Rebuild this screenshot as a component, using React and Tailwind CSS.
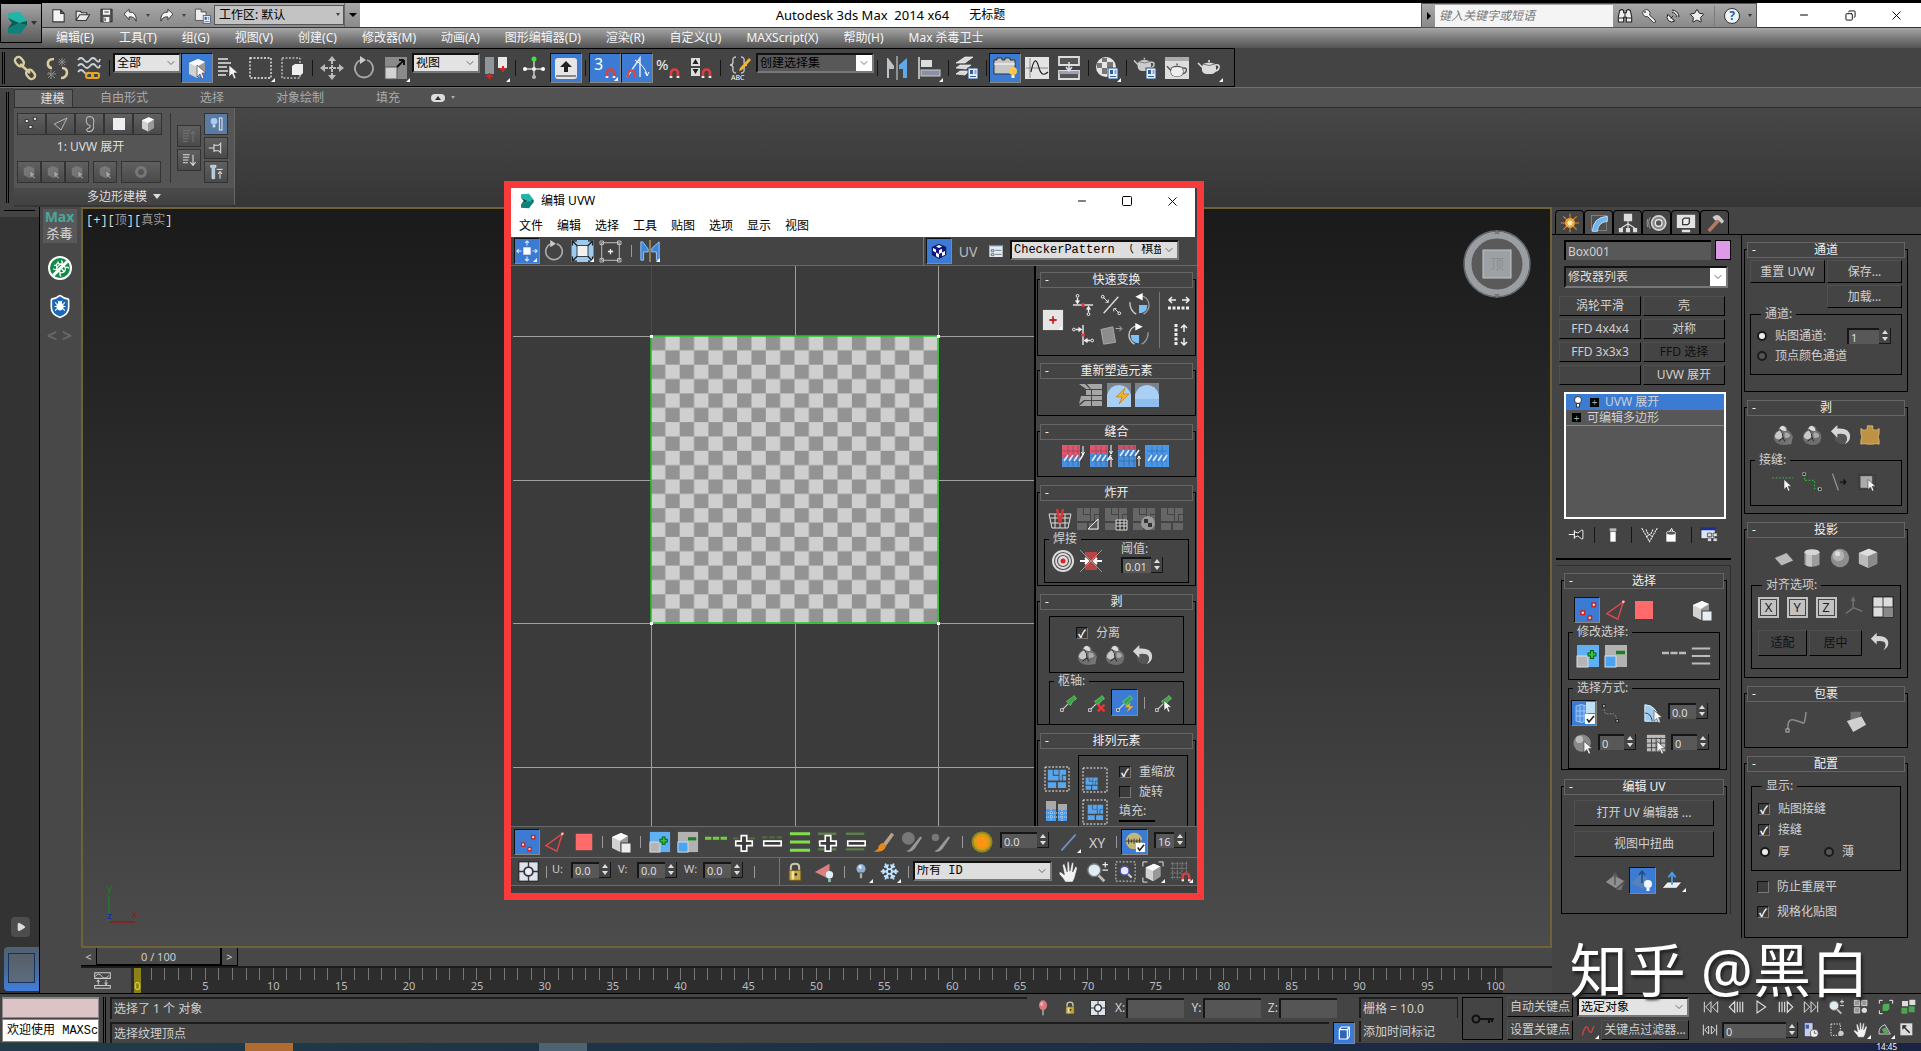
import { useState } from 'react';
import {
  ChevronDown, Minus, Square, X, Copy, Star, SatelliteDish, Snowflake, Bug, Shield, Play,
} from 'lucide-react';

/* Shared pieces of the drawings */
const magnet = (
  <>
    <path d="M14 22v-5a3.5 3.5 0 0 1 7 0v5" fill="none" stroke="#d94040" strokeWidth="2.6" />
    <path d="M12.7 21h2.6M19.7 21h2.6" stroke="#eee" strokeWidth="2" />
  </>
);
const cursor = <path d="M12 9v12l3-3 2 5 2-1-2-5h4z" fill="#f4f4f4" stroke="#333" strokeWidth=".6" />;
const badge = (
  <>
    <rect x="13" y="12" width="10" height="11" fill="#e8eef6" stroke="#2d4f78" />
    <rect x="15" y="14" width="3" height="4" fill="#2d5fa5" />
    <path d="M19.500 15h2M19.500 17h2M15 20.500h6" stroke="#2d5fa5" />
  </>
);
const teapot = (
  <>
    <path d="M6 10q6-3 12 0l1 3q1 6-4 7H9q-5-1-4-7z" fill="currentColor" />
    <path d="M6 14 1 9M18 11q5-1 4 3-1 3-4 3M12 8V6" fill="none" stroke="currentColor" strokeWidth="1.6" />
    <path d="M6 10q6 3 12 0" fill="none" stroke="#777" />
  </>
);
const stone = (
  <>
    <path d="M2 15q0-6 5-8 1-5 5-5 5 0 5 5 6 2 5 9-1 7-10 7-9-1-10-8z" fill="#6f6f6f" />
    <path d="M3 13q2-5 6-6 4 2 3 7-3 4-7 2-2-1-2-3z" fill="#c9c9c9" />
    <path d="M8 5q1-3 4-3 3 1 4 5-4 2-8-2z" fill="#dcdcdc" />
    <path d="M14 9q5 0 6 4-2 3-6 2-1-3 0-6z" fill="#a8a8a8" />
    <path d="M9 6q3 4 3 9l2 4M12 15l-5 4" fill="none" stroke="#222" />
  </>
);
const pin = (
  <>
    <path d="m4 20 7-7" stroke="#ccc" strokeWidth="1.5" />
    <rect x="2" y="19" width="3" height="3" fill="#222" stroke="#eee" />
    <path d="m9 10 5 5 1-3 4-4 2-1-3-4-2 2-4 3z" fill="#36a83e" stroke="#8de08b" strokeWidth=".7" />
  </>
);
const blocks = <path d="M1 1h6v7h7v6H1zM8 1h6v6H8zM15 1h8v6h-5v7h-3zM19 8h4v6h-4zM1 16h10v7H1zM13 16h10v7H13z" fill="currentColor" />;
const cube = (
  <>
    <path d="m4 7 9-4 7 3v11l-8 5-8-4z" fill="#d2d2d2" />
    <path d="m4 7 8 4 8-5-7-3z" fill="#fafafa" />
    <path d="m12 11 8-5v11l-8 5z" fill="#999" />
  </>
);
const ghostCube = (
  <>
    <path d="m5 7 7-3 7 3v9l-7 4-7-4z" fill="#8d8d8d" opacity=".6" />
    <path d="m13 10 1 11 2-3 3 3 1-2-3-2 3-1z" fill="#aaa" stroke="#444" strokeWidth=".5" />
  </>
);
const undoArrow = <path d="M1 8 8 1v4q13-1 14 8 0 6-6 9 4-5 2-9-2-3-10-2v4z" fill="#d6d6d6" />;
const knit = <path d="m3 17 4-6M8 17l4-6M13 17l4-6M18 17l4-6" stroke="#dfeaff" strokeWidth="1.600" />;
const meshLines = <path d="M2 7h20M2 12h20M2 17h20M7 2v20M12 2v20M17 2v20" stroke="#20304a" strokeWidth=".5" opacity=".6" />;
const flatPlane = <path d="m2 13 9-7 11 6-9 8z" fill="#8f8f8f" />;
const quad = (a, b) => (
  <>
    <rect x="1" y="1" width="22" height="22" fill={a} />
    <rect x="1" y="12" width="11" height="11" fill={b} stroke="#dde" />
  </>
);
const plusBox = <path d="M9 5h6v6h6v5h-6v6H9v-6H3v-5h6z" fill="#3a3a3a" stroke="#fff" strokeWidth="1.800" />;
const minusBox = <path d="M3 11h19v5H3z" fill="#3a3a3a" stroke="#fff" strokeWidth="1.800" />;

const glyphs = {
  newFile: <path d="M4 4h11l5 5v12H4zM15 4v5h5" fill="#f3f3f3" stroke="#333" strokeWidth="1.500" />,
  open: <path d="M3 19V6h6l2 2h7v3h4l-5 8zM3 19l5-8h14" fill="#e8e8e8" stroke="#333" strokeWidth="1.500" />,
  save: (
    <>
      <path d="M4 3h16v18H4z" fill="#555" stroke="#222" />
      <path d="M7 4h10v7H7zM8 14h8v7H8z" fill="#f2f2f2" />
      <path d="M10 15v5M9 7h6" stroke="#333" strokeWidth="1.500" />
    </>
  ),
  undo: <path d="M3 10l7-7v4q11 0 10 13-3-7-10-6v4z" fill="#f5f5f5" stroke="#333" strokeWidth="1.300" />,
  redo: <path d="M21 10l-7-7v4Q3 7 4 20q3-7 10-6v4z" fill="#f5f5f5" stroke="#333" strokeWidth="1.300" />,
  project: (
    <>
      <path d="M2 3h8v4h7v12H2z" fill="#eee" stroke="#333" />
      {badge}
    </>
  ),
  binoculars: <path d="M4 4q3-3 6 0v3h4V4q3-3 6 0l2 9v8h-8v-7h-4v7H2v-8zM3 15h7M14 15h7M12 8v5" fill="#f0f0f0" stroke="#222" strokeWidth="1.600" />,
  keySmall: <><path d="M13 11q2-4-1-7-3-3-7-1-4 3-2 7 3 4 7 3l9 9 3-1-1-3z" fill="#f4f4f4" stroke="#333" strokeWidth="1.400" /><circle cx="6" cy="6" r="1.500" fill="#555" /></>,
  hand: <path d="M8 23q-2-4-6-8-2-3 1-3l4 3L5 5q0-2 2-2l3 9V2q0-2 2-1l1 10 2-9q2-1 2 1l-1 9 3-6q2 0 2 2l-3 11-2 4z" fill="#f2f2f2" stroke="#444" strokeWidth=".6" />,
  lock: <><path d="M7 11V6q0-4 5-4t5 4v5" fill="none" stroke="#c9c9b0" strokeWidth="2.400" /><path d="M5 10h14v12H5z" fill="#c4a848" stroke="#6d5a1c" /><path d="M8 11h3v10H8z" fill="#f0e09a" /><circle cx="13" cy="15" r="1.500" fill="#222" /></>,
  link: (
    <g fill="none" stroke="#d9cda0" strokeWidth="2.400">
      <rect x="3" y="1" width="7" height="10" rx="3.500" transform="rotate(-40 6 6)" />
      <rect x="14" y="13" width="7" height="10" rx="3.500" transform="rotate(-40 18 18)" />
      <path d="m7 8 10 9" />
    </g>
  ),
  unlink: (
    <>
      <g fill="none" stroke="#d9cda0" strokeWidth="2.600">
        <path d="M9 3Q2 3 3 9q1 3 4 3M17 12q5 0 5 5-1 5-6 5" />
      </g>
      <path d="M14 3l6 6M20 3l-6 6M17 2v8M13 6h8M3 16l7 6M10 15l-7 7M6 14v9M2 18h9" stroke="#888" />
    </>
  ),
  bind: (
    <>
      <path d="M1 4q3-4 6 0t6 0 6 0 4-1M1 10q3-4 6 0t6 0 6 0 4-1M1 16q3-4 6 0t5 0" fill="none" stroke="#c9d3da" strokeWidth="1.800" />
      <rect x="9" y="17" width="7" height="5" rx="2" fill="none" stroke="#e9a81e" strokeWidth="2" />
      <rect x="15" y="17" width="7" height="5" rx="2" fill="none" stroke="#e9a81e" strokeWidth="2" />
    </>
  ),
  select: <>{cube}{cursor}</>,
  selectName: <><path d="M1 3h10M1 7h13M1 11h9M1 15h10M1 19h8" stroke="#e5e5e5" strokeWidth="1.500" />{cursor}</>,
  region: <rect x="1" y="2" width="21" height="20" fill="none" stroke="#eee" strokeWidth="1.300" strokeDasharray="2 1.500" />,
  crossing: (
    <>
      <rect x="1" y="2" width="18" height="20" fill="none" stroke="#eee" strokeDasharray="2 1.500" />
      <path d="m11 10 3-2h8v9l-2 2h-9z" fill="#eee" />
    </>
  ),
  move: (
    <>
      <path d="M12 0l4 5H8zM12 24l4-5H8zM0 12l5-4v8zM24 12l-5-4v8z" fill="#bbb" />
      <path d="M12 5v14M5 12h14" stroke="#bbb" strokeWidth="2" strokeDasharray="3 1" />
    </>
  ),
  rotate: <><path d="M15 4a9 9 0 1 1-6 0" fill="none" stroke="#aaa" strokeWidth="1.800" /><path d="m8 0 6 4-6 4z" fill="#ccc" /></>,
  scale: (
    <>
      <rect x="1" y="1" width="22" height="22" fill="#8a8a8a" />
      <rect x="1" y="11" width="12" height="12" fill="#d2d2d2" stroke="#555" />
      <path d="m13 11 7-7m0 0h-5m5 0v5" stroke="#111" strokeWidth="2" />
    </>
  ),
  pivot: (
    <>
      <path d="M1 1h9v17H1z" fill="#8d969b" /><path d="M14 1h9v11h-9z" fill="#e8e8e8" />
      <path d="M5.500 17v6M2.500 20h6M19 10v6M16 13h6" stroke="#d22" strokeWidth="2" />
    </>
  ),
  manipulate: (
    <>
      <path d="M12 3v18M3 13h18" stroke="#ccc" strokeWidth="1.500" />
      <circle cx="12" cy="3" r="2.500" fill="#4d4" /><circle cx="3" cy="13" r="2" fill="#fff" />
      <circle cx="21" cy="13" r="2" fill="#fff" /><circle cx="12" cy="21" r="2" fill="#bbb" /><circle cx="12" cy="13" r="2" fill="#eee" />
    </>
  ),
  keyboard: <><rect x="1" y="2" width="22" height="21" rx="3" fill="#e6e6e6" /><path d="M2 20h20" stroke="#888" strokeWidth="2" /><path d="m12 5 6 6h-4v5h-4v-5H6z" fill="#222" /></>,
  snap3: <><text x="1" y="14" fontSize="16" fill="#fff">3</text>{magnet}</>,
  snapAngle: <><path d="M2 21 15 2v19" fill="none" stroke="#dbe8ff" strokeWidth="1.500" /><path d="M10 4q10 6 12 15m-2-3 2 4 2-4" fill="none" stroke="#fff" /><path d="M3 22v-4a3 3 0 0 1 7 0v4" fill="none" stroke="#e04545" strokeWidth="2.500" /></>,
  snapPercent: <><text x="-1" y="14" fontSize="15" fill="#eee">%</text>{magnet}</>,
  snapSpin: <><path d="M2 2h9v8H2zM2 12h9v8H2z" fill="#ddd" /><path d="m6.500 3 3 5h-6zM6.500 18l3-5h-6z" fill="#222" />{magnet}</>,
  named: (
    <>
      <path d="M8 1Q4 1 5 6q0 3-3 3 3 0 3 3-1 5 3 5M13 1q4 0 3 5 0 3 3 3-3 0-3 3 1 5-3 5" fill="none" stroke="#ccc" strokeWidth="1.300" />
      <path d="m12 12 9-10 2 2-9 10-3 1z" fill="#f2b530" /><text x="3" y="24" fontSize="7" fill="#fff">ABC</text>
    </>
  ),
  mirror: <><path d="M2 2v20h2V13h5V10L3 2z" fill="#bcc4ca" /><path d="M22 2v20h-4V13h-4V9z" fill="#62a8e8" /><path d="M12 0v24" stroke="#ddd" /></>,
  uvMirror: <><path d="M2 2v20h3V13h5V10L4 2z" fill="#3d86d8" stroke="#9ccbff" /><path d="M22 2v20h-3V13h-5V9z" fill="#3d86d8" stroke="#9ccbff" /><path d="M12 0v24" stroke="#e8c070" /></>,
  align: <><path d="M2 1v22" stroke="#ddd" strokeWidth="1.500" /><rect x="4" y="4" width="11" height="7" fill="#ddd" /><rect x="4" y="14" width="19" height="6" fill="#8a90a5" stroke="#ccc" /></>,
  layers: <><path d="m1 7 9-6h8l-8 6zM1 12l4-3h11l-5 4zM1 18l4-3h9l-4 4z" fill="#d9d9d9" stroke="#fff" strokeWidth=".6" />{badge}</>,
  ribbon: (
    <>
      <path d="M1 4h3V2h5v2h3V2h5v2h5v14H1z" fill="#c6c6c6" stroke="#333" /><path d="M1 8h21" stroke="#fff" />
      <circle cx="20" cy="15" r="4" fill="#f9c84c" /><path d="M18.500 19h3v3h-3z" fill="#eee" />
    </>
  ),
  curve: <><rect x="0" y="1" width="24" height="22" fill="#e3e3e3" /><path d="M1 12h22M5 2v20" stroke="#888" /><path d="M6 16q4-20 8-4 3 10 9 4" fill="none" stroke="#222" strokeWidth="1.200" /></>,
  schematic: <><path d="M2 1h20v8H2zM2 15h20v8H2z" fill="#555" stroke="#ddd" strokeWidth="1.800" /><path d="M2 15h20v3H2z" fill="#9aa0c0" /><path d="M12 6v8m-3-3 3 4 3-4" stroke="#ddd" strokeWidth="1.600" fill="none" /></>,
  material: (
    <>
      <circle cx="11" cy="11" r="10" fill="#e6e6e6" />
      <path d="M7 2h5v4H7zM2 7h5v5H2zM12 6h6v6h-6zM7 12h5v6H7z" fill="#777" />{badge}
    </>
  ),
  renderSetup: <g color="#ccc"><g transform="translate(0 -4) scale(.95)">{teapot}</g>{badge}</g>,
  renderFrame: <><rect x="0" y="1" width="24" height="22" fill="#ddd" /><path d="M0 1h24v4H0z" fill="#aaa" /><g color="#555" transform="translate(1 2) scale(.92)">{teapot}</g><path d="M7 12q5-2 10 0l1 3q0 4-3 5H9q-3-1-3-5z" fill="#eee" /></>,
  render: <g color="#dcdcdc" transform="translate(0 -2)">{teapot}</g>,
  vertsGray: <g fill="#eee" stroke="#222"><rect x="3" y="6" width="4" height="4" /><rect x="14" y="3" width="4" height="4" /><rect x="8" y="14" width="4" height="4" /></g>,
  triGray: <path d="M3 12 20 4l-8 16z" fill="none" stroke="#bbb" strokeWidth="1.300" />,
  borderGray: <path d="M7 7q0-5 5-5 6 1 5 8-1 5 0 7-2 6-8 5-3-2 0-4 4-1 3-4-5-1-5-7z" fill="none" stroke="#bbb" strokeWidth="1.400" />,
  polyGray: <rect x="4" y="4" width="16" height="16" fill="#eee" />,
  cube,
  ghost: ghostCube,
  ring: <circle cx="12" cy="12" r="6" fill="none" stroke="#777" strokeWidth="4" />,
  loopUp: <path d="M3 4h11M3 8h10M3 12h9M3 16h8M3 20h7M18 21V6m-3 3 3-4 3 4" stroke="#777" strokeWidth="1.400" fill="none" />,
  loopDown: <path d="M3 4h10M3 8h9M3 12h8M3 16h7M18 4v15m-4-4 4 5 4-5" stroke="#ddd" strokeWidth="1.600" fill="none" />,
  bulbBar: <><circle cx="9" cy="8" r="5" fill="#a9cdf0" /><path d="M7 13h4v4H7z" fill="#cde" /><rect x="17" y="3" width="4" height="18" fill="none" stroke="#eee" strokeWidth="1.500" /></>,
  pushpin: <path d="M1 12h8M9 6v12M9 8h7l3-3v14l-3-3H9z" fill="#555" stroke="#ddd" strokeWidth="1.600" />,
  showEnd: <><path d="M4 2h8v3h-2v17H6V5H4z" fill="#9cc8ee" stroke="#eee" /><path d="M13 8h9M18 22V12m-3 3 3-4 3 4" stroke="#eee" strokeWidth="1.500" fill="none" /></>,
  verts: <g fill="#fff" stroke="#c22" strokeWidth="1.500"><rect x="17" y="5" width="3.500" height="3.500" /><rect x="6" y="13" width="3.500" height="3.500" /><rect x="13" y="18" width="3.500" height="3.500" /></g>,
  tri: <><path d="M2 16 20 3l-6 19z" fill="none" stroke="#e0484c" strokeWidth="1.500" /><circle cx="20" cy="3" r="1.500" fill="#fbb" /></>,
  poly: <rect x="3" y="3" width="18" height="18" fill="#ff6b6b" />,
  element: <>{cube}<rect x="13" y="13" width="10" height="10" fill="#e9eef2" stroke="#444" /></>,
  grow: <>{quad('#5fb0f5', '#b5b5b5')}<path d="M16 6v9M11.500 10.500h9" stroke="#0a5c10" strokeWidth="4" /><path d="M16 7v7M12.500 10.500h7" stroke="#2fc73a" strokeWidth="2" /></>,
  shrink: <>{quad('#b2b2b2', '#4ba4f2')}<path d="M12 8.500h9" stroke="#17801f" strokeWidth="3.500" /></>,
  dashes: <path d="M0 8h7M8.500 8h7M17 8h7" stroke="#6fd03c" strokeWidth="3.200" />,
  dashPlus: <><path d="M0 8h6M17 8h7" stroke="#4f6a40" strokeWidth="2.500" />{plusBox}</>,
  dashMinus: <><path d="M1 7h6M9 7h6M17 7h6" stroke="#4f6a40" strokeWidth="2.500" />{minusBox}</>,
  bars: <path d="M1 3h22M1 12h22M1 21h22" stroke="#7fe04a" strokeWidth="3.200" />,
  barPlus: <><path d="M1 3h20M1 12h20M1 20h20" stroke="#5c7d4c" strokeWidth="2.500" />{plusBox}</>,
  barMinus: <><path d="M1 3h20M1 20h20" stroke="#5c7d4c" strokeWidth="2.500" />{minusBox}</>,
  dashGray: <path d="M0 9h7M8.500 9h7M17 9h7" stroke="#bbb" strokeWidth="2.500" />,
  barsGray: <path d="M1 3h22M1 12h22M1 21h22" stroke="#bbb" strokeWidth="2.500" />,
  brush: <><path d="m10 15 10-13 3 2-10 14z" fill="#b9a288" /><path d="M11 13q5 2 2 6-4 5-12 3 5-1 5-5 2-4 5-4z" fill="#e08a20" /></>,
  brushBig: <><circle cx="8" cy="8" r="7" fill="#777" /><path d="m12 17 9-11 2 1-8 12q-4 5-9 3 4-1 6-5z" fill="#999" /></>,
  brushSmall: <><circle cx="7" cy="7" r="4" fill="#777" /><path d="m12 17 9-11 2 1-8 12q-4 5-9 3 4-1 6-5z" fill="#999" /></>,
  falloff: <><circle cx="12" cy="12" r="10.500" fill="#8a8a20" /><circle cx="12" cy="12" r="8.500" fill="#d89a18" /><circle cx="12" cy="12" r="5.500" fill="#ff9410" /></>,
  diag: <path d="M3 22 20 3" stroke="#6f93c8" strokeWidth="2.200" />,
  softUnits: <><circle cx="11" cy="11" r="9" fill="#c3b778" /><path d="M2 11h18M5 8v6M8 9v4M11 8v6M14 9v4M17 8v6" stroke="#333" /><rect x="13" y="13" width="10" height="10" fill="#fff" /><path d="m15 18 2 3 5-6" fill="none" stroke="#222" strokeWidth="1.600" /></>,
  offset: <><rect x="1" y="1" width="22" height="22" fill="#dde3e8" stroke="#111" /><circle cx="12" cy="12" r="5" fill="#eee" stroke="#334" strokeWidth="2" /><path d="M12 1v6M12 17v6M1 12h6M17 12h6" stroke="#334" strokeWidth="1.500" /></>,
  hide: <><path d="M2 12 18 3v17z" fill="#d98080" /><circle cx="18" cy="15" r="4" fill="#dceefa" /><path d="M16.500 19h3v4h-3z" fill="#8bb" /></>,
  bulb: <><circle cx="12" cy="8" r="5.500" fill="#8fb0d2" /><circle cx="11" cy="6" r="2" fill="#e4f0fb" /><path d="M10 13h4v7h-4z" fill="#aaa" stroke="#333" strokeWidth=".8" /></>,
  bulbOn: <><circle cx="12" cy="8" r="7" fill="#fff" stroke="#111" strokeWidth="1.500" /><path d="M9 15h6v7H9z" fill="#fff" stroke="#111" strokeWidth="1.500" /></>,
  zoom: <><path d="m13 15 7 7" stroke="#bbb" strokeWidth="3" /><circle cx="9" cy="10" r="7" fill="#dfeef2" stroke="#777" strokeWidth="1.500" /><path d="M21 1v6M18 4h6M18 10h6" stroke="#eee" strokeWidth="1.300" /></>,
  zoomRegion: <><rect x="1" y="1" width="22" height="22" fill="none" stroke="#eee" strokeDasharray="2 2" /><path d="m14 14 5 5" stroke="#ccc" strokeWidth="2.500" /><circle cx="11" cy="11" r="5" fill="#e8e8ff" stroke="#55a" strokeWidth="1.500" /></>,
  zoomExt: <><path d="M1 6V1h5M18 1h5v5" fill="none" stroke="#eee" /><path d="M1 18v5h5" fill="none" stroke="#eee" />{cube}</>,
  gridSnap: <><path d="M1 3h18M1 8h18M1 13h12M1 18h12M3 1v19M8 1v19M13 1v14M18 1v12" stroke="#888" strokeDasharray="2 1" />{magnet}</>,
  uvMove: <><rect x="8" y="8" width="8" height="8" fill="#fff" /><path d="M12 1v5M12 18v5M1 12h5M18 12h5M10 3l2-2 2 2M10 21l2 2 2-2M3 10l-2 2 2 2M21 10l2 2-2 2" stroke="#dbe8ff" fill="none" strokeWidth="1.200" /></>,
  uvScale: <><rect x="0" y="0" width="24" height="24" fill="#9bcbf0" /><path d="m1 1 6 6M23 1l-6 6M1 23l6-6M23 23l-6-6M1 6V1h5M18 1h5v5M1 18v5h5M18 23h5v-5" stroke="#222" fill="none" strokeWidth="1.500" /><rect x="6" y="6" width="12" height="12" fill="#f1f1f1" stroke="#333" /></>,
  uvFree: <><rect x="2" y="2" width="20" height="20" fill="none" stroke="#ccc" /><path d="M12 9v6M9 12h6" stroke="#eee" strokeWidth="1.500" /><path d="M0 0h4v4H0zM20 0h4v4h-4zM0 20h4v4H0zM20 20h4v4h-4z" fill="none" stroke="#ccc" /></>,
  checker: <><path d="m3 7 9-4 9 4v10l-9 5-9-5z" fill="#11167c" stroke="#000a50" /><path d="m4 8 4 2v4l-4-2zM8 14l4 2v5l-4-2zM12 11l4-2v5l-4 2zM16 14l4-2v5l-4 2zM12 4l4 2-4 2-4-2z" fill="#fff" /></>,
  props: <><rect x="2" y="3" width="20" height="18" fill="#e4ebf2" /><path d="M2 4h20" stroke="#5b8cc2" strokeWidth="2" /><path d="M5 10h4v3H5zM5 16h4v3H5zM11 11h9M11 17h9" stroke="#345" fill="none" /></>,
  center: <><rect x="1" y="1" width="22" height="22" fill="#e5e5e5" /><path d="M12 8v8M8 12h8" stroke="#c22" strokeWidth="2" /></>,
  alignH: <><path d="M1 12h22" stroke="#eee" strokeWidth="1.500" /><path d="M6 4v5M4 7l2 3 2-3M18 20v-5M16 17l2-3 2 3" stroke="#eee" fill="none" strokeWidth="1.500" /><circle cx="6" cy="2" r="1.500" fill="none" stroke="#fff" /><circle cx="18" cy="22" r="1.500" fill="none" stroke="#fff" /><path d="M12 10v4" stroke="#e33" strokeWidth="3" /></>,
  alignV: <><path d="M12 1v22" stroke="#eee" strokeWidth="1.500" /><path d="M4 6h5M7 4l3 2-3 2M20 18h-5M17 16l-3 2 3 2" stroke="#eee" fill="none" strokeWidth="1.500" /><circle cx="2" cy="6" r="1.500" fill="none" stroke="#fff" /><circle cx="22" cy="18" r="1.500" fill="none" stroke="#fff" /><path d="M10 12h4" stroke="#e33" strokeWidth="3" /></>,
  linear: <><path d="M4 21 20 3" stroke="#ddd" strokeWidth="1.500" /><path d="m4 4 5 5M20 20l-4-4M6 9h3V6M18 16h-3v3" stroke="#eee" fill="none" /><circle cx="3" cy="3" r="1.500" fill="none" stroke="#fff" /><circle cx="21" cy="21" r="1.500" fill="none" stroke="#fff" /></>,
  rotCcw: <><path d="M2 9q0 9 7 13" fill="none" stroke="#ccc" strokeWidth="1.500" /><path d="M14 2q8 1 9 10 0 6-6 10" fill="none" stroke="#999" strokeWidth="1.500" /><path d="M12 12h9q0 9-9 9z" fill="#7cc0f4" /><path d="m8 3 8-4v8z" fill="#fff" /></>,
  rotCw: <><path d="M22 9q0 9-7 13" fill="none" stroke="#999" strokeWidth="1.500" /><path d="M10 2q-8 1-9 10 0 6 6 10" fill="none" stroke="#ccc" strokeWidth="1.500" /><path d="M12 12H3q0 9 9 9z" fill="#7cc0f4" /><path d="m16 3-8-4v8z" fill="#fff" /></>,
  alignEdge: <><path d="m1 6 13-3 3 17-13 2z" fill="#8d8d8d" stroke="#aaa" /><path d="M17 5h6m-2-3 3 3-3 3" fill="none" stroke="#bbb" /></>,
  spaceH: <><path d="M3 7h6M15 7h6M5 4 2 7l3 3M19 4l3 3-3 3" stroke="#eee" fill="none" strokeWidth="1.500" /><path d="M1 15h22" stroke="#eee" strokeWidth="3" strokeDasharray="3 1.500" /></>,
  spaceV: <><path d="M17 3v6M17 15v6M14 5l3-3 3 3M14 19l3 3 3-3" stroke="#eee" fill="none" strokeWidth="1.500" /><path d="M9 1v22" stroke="#eee" strokeWidth="3" strokeDasharray="3 1.500" /></>,
  straighten: <path d="M0 1h6l5 5H7zM8 1h15v5H12zM7 7h5v5H7zM13 7h10v5H13zM2 13h10v4H5l-5 4zM13 13h10v4H13zM0 23l6-5h6v5zM13 18h10v5H13z" fill="#a5a5a5" />,
  relaxAuto: <><rect width="24" height="24" fill="#7a838c" /><path d="M0 24V12Q3 2 12 2t12 10v12z" fill="#a9cff5" /><path d="m18 5-9 9h6l-3 7 10-10h-6z" fill="#f1b22d" stroke="#a66b00" strokeWidth=".5" /></>,
  relax: <><rect width="24" height="24" fill="#7a838c" /><path d="M0 24V12Q3 2 12 2t12 10v12z" fill="#a9cff5" /><path d="M0 16h24v8H0z" fill="#7fb2ea" opacity=".6" /></>,
  stitch1: <><rect x="1" y="1" width="18" height="12" fill="#e0566c" /><rect x="1" y="13" width="18" height="10" fill="#4a90dd" />{meshLines}{knit}<path d="M22 2v9m-1.500-3 1.500 3 1.500-3" stroke="#fff" fill="none" /></>,
  stitch2: <><rect x="1" y="1" width="18" height="9" fill="#e0566c" /><rect x="1" y="10" width="18" height="13" fill="#4a90dd" />{meshLines}{knit}<path d="M22 1v8m-1.500-2 1.500 3 1.500-3M22 14v9m-1.500-7 1.500-3 1.500 3" stroke="#fff" fill="none" /></>,
  stitch3: <><rect x="1" y="1" width="18" height="5" fill="#c0556c" /><rect x="1" y="6" width="18" height="17" fill="#4a90dd" />{meshLines}<g transform="translate(0 -5)">{knit}</g><path d="M22 12v10m-1.500-7 1.500-3 1.500 3" stroke="#fff" fill="none" /></>,
  stitch4: <><rect x="0" y="1" width="24" height="22" fill="#4a97ea" />{meshLines}{knit}</>,
  breakUv: <><path d="M1 7h22l-3 14H4zM2 11h20M3 16h18M7 7v14M12 7v14M17 7v14" fill="none" stroke="#ddd" /><path d="M9 2l3 14 3-14" fill="none" stroke="#d33" strokeWidth="2.500" /></>,
  flatAngle: <g color="#666">{blocks}<path d="m12 22 10-10v10z" fill="#555" stroke="#eee" /></g>,
  flatGroup: <g color="#666">{blocks}<path d="M12 13h11v10H12zM12 16h11M12 19h11M16 13v10M20 13v10" fill="#333" stroke="#ddd" /></g>,
  flatMat: <g color="#666">{blocks}<circle cx="16" cy="16" r="7" fill="#999" /><path d="M12 12h4v4h-4zM16 16h4v4h-4z" fill="#333" /></g>,
  flatCustom: <g color="#666">{blocks}</g>,
  target: <><circle cx="12" cy="12" r="11" fill="#ddd" /><circle cx="12" cy="12" r="8.500" fill="none" stroke="#555" strokeWidth="1.200" /><circle cx="12" cy="12" r="5.500" fill="none" stroke="#555" strokeWidth="1.200" /><circle cx="12" cy="12" r="2.500" fill="#d22" /></>,
  weld: <><path d="M6 3h12v18H6z" fill="#b54545" /><path d="M1 1l22 22M23 1 1 23" stroke="#999" /><path d="M1 12h7M16 12h7M6 9l3 3-3 3M18 9l-3 3 3 3" stroke="#fff" fill="none" strokeWidth="2" /></>,
  stoneQuick: <>{stone}<path d="m14 22 9-10-2 10z" fill="#777" /></>,
  stone,
  resetPeel: <><circle cx="13" cy="14" r="8" fill="#555" />{undoArrow}</>,
  undoArrow,
  pelt: <path d="M9 6V2h6v4q4 2 7-1v5q-2 4 0 8v4q-4-1-7 0H9q-3-1-7 0v-4q2-4 0-8V5q3 3 7 1z" fill="#bd9245" stroke="#e3c37d" strokeWidth=".8" />,
  pin,
  pinX: <>{pin}<path d="m13 14 8 8m0-8-8 8" stroke="#e33" strokeWidth="3" /></>,
  pinAuto: <>{pin}<path d="m19 11-7 6h5l-3 6 8-7h-5z" fill="#f4b52c" /></>,
  pinSel: <>{pin}{cursor}</>,
  packFull: <g color="#5aa5ea"><rect x="0" y="0" width="24" height="24" fill="none" stroke="#eee" strokeDasharray="2 1.500" /><g transform="translate(2 2) scale(.83)">{blocks}</g></g>,
  packSmall: <g color="#5aa5ea"><rect x="0" y="0" width="24" height="24" fill="none" stroke="#eee" strokeDasharray="2 1.500" /><g transform="translate(2 9) scale(.55)">{blocks}</g></g>,
  packRound: <g color="#5aa5ea"><rect x="0" y="0" width="24" height="24" fill="none" stroke="#eee" strokeDasharray="2 1.500" /><g transform="translate(4 4) scale(.7)">{blocks}</g></g>,
  packRescale: <><path d="M1 2h10v8H1zM13 5h9v6h-9z" fill="#aaa" /><path d="M1 10h10v12H1zM13 11h9v11h-9z" fill="#4c9bea" /><path d="M1 14h22M1 18h22M6 10v12M17 11v11" stroke="#cde" strokeDasharray="1 1" /></>,
  create: <><path d="M12 1v22M1 12h22M4 4l16 16M20 4 4 20" stroke="#d98a30" strokeWidth="1.300" /><circle cx="12" cy="12" r="6" fill="#f0a038" /><circle cx="12" cy="12" r="3" fill="#ffeeb0" /></>,
  modify: <><rect x="3" y="3" width="18" height="18" fill="none" stroke="#888" /><path d="M4 22Q5 5 22 4v6q-11 1-12 12z" fill="#6fb5ee" stroke="#cfe8ff" /></>,
  hierarchy: <><path d="M7 1h10v9H7zM1 18h5v5H1zM9.500 18h5v5h-5zM18 18h5v5h-5z" fill="#ddd" /><path d="M12 10v8M12 13 4 18M12 13l8 5" stroke="#ddd" strokeWidth="1.400" /></>,
  motion: <><circle cx="14" cy="12" r="8.500" fill="#888" stroke="#d6d6d6" strokeWidth="2" /><circle cx="14" cy="12" r="4" fill="#555" stroke="#eee" strokeWidth="1.500" /><path d="M4 5q-4 7 0 14M1 7q-2 5 0 10" stroke="#aaa" fill="none" /></>,
  display: <><path d="M1 2h22v16H1zM7 20h10v3H7z" fill="#e2e2e2" /><path d="m8 8 2-2h6v6l-2 2H8z" fill="#eee" stroke="#333" strokeWidth="1.500" /></>,
  hammer: <><path d="m3 20 12-13 3 3L6 23z" fill="#b07968" /><path d="M9 5q6-5 10 0l4 5-3 3-4-5-4 1z" fill="#ccc" /></>,
  pushPinW: <path d="M1 12h8M9 6v12M9 8l5 2 5-4h2v12h-2l-5-4-5 2z" fill="#333" stroke="#eee" strokeWidth="1.400" />,
  tube: <><path d="M7 2h10v4H7z" fill="#bbb" /><path d="M8 7h8v15H8z" fill="#fff" /></>,
  unique: <path d="m1 3 7 12M23 3l-7 12M7 5l4 8M17 5l-4 8M8 15l4-3 4 3-4 7z" fill="none" stroke="#eee" strokeWidth="1.500" strokeDasharray="3 1" />,
  trash: <><path d="M5 10h14v12H5z" fill="#fff" /><ellipse cx="12" cy="9" rx="7" ry="3" fill="#555" stroke="#fff" /><path d="m10 7 3-5 2 5" stroke="#fff" fill="none" strokeWidth="1.500" /></>,
  config: <><rect x="0" y="2" width="20" height="16" fill="#dce4f8" stroke="#222" /><path d="M0 4h20" stroke="#1d2c9c" strokeWidth="4" /><path d="M9 10h6v5H9zM17 10h6v5h-6zM9 17h6v5H9zM17 17h6v5h-6z" fill="#ddd" stroke="#333" /></>,
  selElement: <><path d="M4 5q5-3 11 0v15q-6 3-11 0zM8 4v17M12 4v17M4 10h11M4 15h11" fill="#5694de" stroke="#a9d0ff" strokeWidth=".8" /><path d="M14 1h9v11h-9z" fill="#bfe0f5" /><rect x="13" y="13" width="10" height="10" fill="#fff" /><path d="m15 18 2 3 5-6" fill="none" stroke="#222" strokeWidth="1.600" /></>,
  pathGray: <><path d="M4 4v6q0 3 5 3h6q3 1 4 8" fill="none" stroke="#999" strokeDasharray="2 1.500" /><rect x="2" y="2" width="3" height="3" fill="#ccc" stroke="#111" /><rect x="18" y="20" width="3" height="3" fill="#ccc" stroke="#111" /></>,
  planar: <><path d="M2 3q13 0 16 18H2z" fill="#9fcdf0" stroke="#e7f5ff" /><path d="M2 12q7 0 8 9" fill="none" stroke="#336" />{cursor}</>,
  smooth: <><circle cx="10" cy="11" r="9.500" fill="#888" /><circle cx="7" cy="7" r="4" fill="#bbb" />{cursor}</>,
  matId: <><path d="M1 2h20v18H1z" fill="#bbb" /><path d="M1 6h20M1 11h20M1 16h20M6 5v15M11 5v15M16 5v15" stroke="#444" />{cursor}</>,
  seamEdit: <><path d="M-2 7h25" stroke="#2ab13a" strokeWidth="1.500" strokeDasharray="2 2" />{cursor}</>,
  seamPath: <><path d="M3 3v7h12v10h6" fill="none" stroke="#2ab13a" strokeWidth="1.500" strokeDasharray="2 2" /><rect x="1" y="1" width="3" height="3" fill="#111" stroke="#eee" strokeWidth=".7" /><rect x="20" y="19" width="3" height="3" fill="#111" stroke="#eee" strokeWidth=".7" /></>,
  seamConv: <><path d="m3 2 7 20" stroke="#999" strokeWidth="1.500" /><path d="M12 12h6m-2-3 3 3-3 3" fill="none" stroke="#111" strokeWidth="1.500" /></>,
  seamExp: <><rect x="3" y="5" width="14" height="14" fill="#aaa" /><path d="M1 3h20v18H1z" fill="none" stroke="#222" strokeDasharray="1 2" />{cursor}</>,
  plane: <path d="m1 12 14-6 8 9-14 6z" fill="#b9b9b9" />,
  cylinder: <><path d="M3 5v15q9 5 18 0V5z" fill="#9c9c9c" /><path d="M5 6v15q3 2 7 1V6z" fill="#c4c4c4" /><ellipse cx="12" cy="5" rx="9" ry="3.500" fill="#d6d6d6" /></>,
  sphere: <><circle cx="12" cy="12" r="11" fill="#8e8e8e" /><circle cx="10" cy="9" r="7" fill="#b3b3b3" /><circle cx="9" cy="7" r="3" fill="#ddd" /></>,
  box: <><path d="m1 6 12-5 10 4v14l-11 5-11-5z" fill="#bbb" /><path d="m1 6 11 4 11-5-10-4z" fill="#dedede" /><path d="m12 10 11-5v14l-11 5z" fill="#8b8b8b" /></>,
  axes: <path d="M11 13V2M11 13l-9 7M11 13l11 4M9 5l2-4 2 4" stroke="#6d6d6d" strokeWidth="2" fill="none" />,
  viewAlign: <><rect x="1" y="1" width="22" height="22" fill="#dcdcdc" stroke="#111" /><rect x="12" y="12" width="11" height="11" fill="#888" /><path d="M12 1v22M1 12h22" stroke="#333" /></>,
  spline: <><path d="M3 20q-1-12 6-10t9 3 3-11" fill="none" stroke="#8d8d8d" strokeWidth="1.500" /><rect x="1" y="19" width="3" height="3" fill="#333" stroke="#bbb" /></>,
  unfold: <><path d="M6 2h12l-4 12H6z" fill="#6d6d6d" /><path d="m2 12 16-5 5 9-14 8z" fill="#cfcfcf" /></>,
  planeQuick: <>{flatPlane}<path d="M12 16V4m-3 3 3-4 3 4M13 21l9-8-3 9" stroke="#555" strokeWidth="1.500" fill="#777" /></>,
  planeBulb: <><path d="m1 14 9-8 12 6-9 8z" fill="#5683bb" /><path d="M12 14V3m-3 3 3-4 3 4" stroke="#234f86" strokeWidth="1.500" fill="none" /><circle cx="18" cy="15" r="4" fill="#eef7ff" /><path d="M16.500 19h3v3h-3z" fill="#fff" /></>,
  planeUp: <><path d="m1 20 6-7h16l-6 7z" fill="#eee" stroke="#333" /><path d="M12 16V4m-4 4 4-5 4 5" stroke="#4b9be8" strokeWidth="2" fill="none" /></>,
  trackIcon: <><path d="M1 1h22v8H1zM1 19h22v4H1z" fill="none" stroke="#ccc" strokeWidth="1.500" /><path d="M2 6q5-6 9 0t10-1M6 18v-7m-2 3 2-3 2 3M17 11v7m-2-3 2 3 2-3" fill="none" stroke="#ccc" strokeWidth="1.400" /></>,
  balloon: <><ellipse cx="12" cy="8" rx="6" ry="7.500" fill="#e07880" /><ellipse cx="10" cy="6" rx="2" ry="3" fill="#f5b5ba" /><path d="M12 15v8" stroke="#ddd" strokeWidth="1.500" /></>,
  keyBig: <><circle cx="5" cy="12" r="3.500" fill="none" stroke="#111" strokeWidth="2" /><path d="M8.500 12H23M18 12v4M21 12v3" stroke="#111" strokeWidth="2.200" /></>,
  isolate: <path d="m5 7 3-4h12v14l-3 4H5zM5 7h12v14M17 7l3-4" fill="#2f64b4" stroke="#fff" strokeWidth="1.800" />,
  redCurve: <path d="M2 20Q7 0 11 11t8-5" fill="none" stroke="#c84646" strokeWidth="2" />,
  first: <path d="M2 4v16M12 4 4 12l8 8zM22 4l-8 8 8 8z" fill="#444" stroke="#ddd" strokeWidth="1.500" />,
  prev: <path d="M10 4 2 12l8 8zM14 4v16M18 4v16M22 4v16" fill="#444" stroke="#ddd" strokeWidth="1.800" />,
  playG: <path d="m6 3 13 9L6 21z" fill="#444" stroke="#ddd" strokeWidth="1.600" />,
  next: <path d="m14 4 8 8-8 8zM2 4v16M6 4v16M10 4v16" fill="#444" stroke="#ddd" strokeWidth="1.800" />,
  last: <path d="M22 4v16M12 4l8 8-8 8zM2 4l8 8-8 8z" fill="#444" stroke="#ddd" strokeWidth="1.500" />,
  keyMode: <path d="M2 4v16M22 4v16M10 6l-6 6 6 6zM14 6l6 6-6 6z" fill="#444" stroke="#ddd" strokeWidth="1.500" />,
  zoomAll: <><path d="M2 2h8v8H2zM13 2h8v8h-8zM2 13h8v8H2z" fill="#999" stroke="#eee" /><circle cx="17" cy="17" r="4" fill="#ddd" /></>,
  extents: <><path d="M2 7V2h5M17 2h5v5M2 17v5h5" fill="none" stroke="#eee" strokeWidth="1.500" /><path d="m7 9 3-2h7v8l-3 3H7z" fill="#4caf50" /></>,
  extentsAll: <><path d="M3 3h9v8H3zM14 1h9v8h-9z" fill="#ddd" /><path d="M2 13h9v9H2zM13 11h9v9h-9z" fill="#4ea352" /></>,
  timeCfg: <><path d="M2 1h13v21H2z" fill="#ccd" stroke="#225" /><path d="M4 4h5v6H4z" fill="#2d64b5" /><circle cx="17" cy="17" r="6" fill="#eee" stroke="#333" /><path d="M17 13v4h3" stroke="#333" fill="none" /></>,
  fov: <><path d="M3 18q-1-11 9-14l8 14z" fill="none" stroke="#ccc" strokeWidth="1.500" /><path d="m7 11 6-3 5 7-6 4z" fill="#5aa35e" /></>,
  maxView: <><path d="M2 2h18v18H2z" fill="#ddd" /><path d="m6 6 10 10M6 11V6h5" stroke="#222" fill="none" strokeWidth="2" /></>,
  regionDot: <><path d="M3 3h14v17H3z" fill="none" stroke="#eee" strokeWidth="1.500" strokeDasharray="2 2" /><circle cx="18" cy="17" r="4" fill="#ccc" /></>,
  logo: (
    <>
      <path d="M3 2 15 1l7 9-8 2L3 7z" fill="#1fb5a9" />
      <path d="m3 22 12 1 7-9-8-2-11 5z" fill="#0d8278" />
      <path d="m22 10-8 2 8 2zM3 7l11 5-11 5 4-5z" fill="#075b56" />
    </>
  ),
};

function Icon({ name, className = 'w-6 h-6' }) {
  return (
    <svg viewBox="0 0 24 24" className={`shrink-0 overflow-visible ${className}`} aria-hidden="true">
      {glyphs[name]}
    </svg>
  );
}

function Tool({ name, label, active, fly, box = 'w-8 h-[30px]', icon = 'w-6 h-6', children }) {
  return (
    <button
      type="button"
      aria-label={label || name}
      className={`relative flex shrink-0 items-center justify-center ${box} ${active ? 'bg-[#3b7bd4] border border-t-[#111] border-l-[#111] border-[#888]' : ''}`}
    >
      {children || <Icon name={name} className={icon} />}
      {fly && <i className="absolute right-[2px] bottom-px border-[2px] border-transparent border-r-white border-b-white" />}
    </button>
  );
}

function Sep({ className = 'w-[7px]' }) {
  return (
    <span className={`flex shrink-0 justify-center ${className}`}>
      <i className="h-4 w-px bg-[#151515]" />
    </span>
  );
}

function Tick({ className = 'w-4' }) {
  return (
    <span className={`flex shrink-0 justify-center ${className}`}>
      <i className="h-3 w-px bg-[#999]" />
    </span>
  );
}

function Select({ label, value, className = '', selectClass = 'bg-[#e3e3e3] text-black', arrow = 'text-[#444]' }) {
  return (
    <span className={`relative flex shrink-0 ${className}`}>
      <select aria-label={label} className={`w-full appearance-none truncate border-2 border-[#111] border-r-[#777] border-b-[#777] pl-0.5 pr-4 text-[12px] leading-none outline-none ${selectClass}`}>
        <option>{value}</option>
      </select>
      <span className={`pointer-events-none absolute inset-y-[2px] right-[2px] flex w-4 items-center justify-center ${arrow}`}>
        <ChevronDown size={12} strokeWidth={1.5} />
      </span>
    </span>
  );
}

function Spinner({ label, value, width = 'w-7', className = '' }) {
  return (
    <span className={`flex h-4 shrink-0 ${className}`}>
      <input
        aria-label={label}
        defaultValue={value}
        className={`${width} border-t-2 border-l-2 border-[#161616] bg-[#585858] pl-0.5 text-[11px] leading-none text-[#ddd] outline-none`}
      />
      <span className="flex w-3 flex-col justify-center gap-[3px] border-r border-b border-[#161616]">
        <button type="button" aria-label={`${label} +`} className="mx-auto border-x-[3px] border-b-4 border-transparent border-b-[#ddd]" />
        <button type="button" aria-label={`${label} -`} className="mx-auto border-x-[3px] border-t-4 border-transparent border-t-[#ddd]" />
      </span>
    </span>
  );
}

function Rollout({ title, className = '', body = '', children }) {
  return (
    <section className={`border border-black ${className}`}>
      <h3 className="mx-0.5 -mt-2 flex h-4 items-center border border-[#656565] bg-[#444] text-[12px] leading-none text-[#f0f0f0]">
        <button type="button" aria-label={`${title} -`} className="w-3 text-center">-</button>
        <span className="flex-1 pr-3 text-center">{title}</span>
      </h3>
      <div className={body}>{children}</div>
    </section>
  );
}

function Group({ title, className = '', children }) {
  return (
    <fieldset className={`min-w-0 border border-black ${className}`}>
      <legend className="ml-1 px-1 text-[12px] leading-4">{title}</legend>
      {children}
    </fieldset>
  );
}

function Check({ label, checked, className = '' }) {
  return (
    <label className={`flex items-center gap-2 ${className}`}>
      <input
        type="checkbox"
        defaultChecked={checked}
        className="flex h-3 w-3 shrink-0 appearance-none items-center justify-center border border-[#111] border-r-[#777] border-b-[#777] bg-[#3c3c3c] text-[11px] font-bold leading-none text-white checked:before:content-['✓']"
      />
      {label}
    </label>
  );
}

function Radio({ label, name, checked, className = '' }) {
  return (
    <label className={`flex items-center gap-2 ${className}`}>
      <input
        type="radio"
        name={name}
        defaultChecked={checked}
        className="h-[10px] w-[10px] shrink-0 appearance-none rounded-full border-2 border-[#1b1b1b] bg-[#555] checked:bg-[#eee]"
      />
      {label}
    </label>
  );
}

function PushButton({ children, className = '' }) {
  return (
    <button type="button" className={`truncate border border-[#505050] border-r-black border-b-black text-[12px] leading-none ${className}`}>
      {children}
    </button>
  );
}

function TitleBar() {
  return (
    <div className="flex h-[25px] bg-white">
      <div className="flex shrink-0 items-center border-b border-[#333] bg-gradient-to-b from-[#a8a8a8] to-[#8a8a8a] pl-1">
        {['newFile', 'open', 'save', 'undo'].map((n) => (
          <Tool key={n} name={n} box="w-6 h-6" icon="w-[17px] h-[17px]" />
        ))}
        <i className="mx-1 border-x-2 border-t-[3px] border-transparent border-t-[#444]" />
        <Tool name="redo" box="w-6 h-6" icon="w-[17px] h-[17px]" />
        <i className="mx-1 border-x-2 border-t-[3px] border-transparent border-t-[#444]" />
        <Tool name="project" box="w-6 h-6" icon="w-[17px] h-[17px]" />
        <span className="relative flex h-5 w-[130px]">
          <select aria-label="工作区" className="w-full appearance-none border border-[#555] bg-[#c3c3c3] pl-1 text-[12px] leading-none text-black">
            <option>工作区: 默认</option>
          </select>
          <i className="pointer-events-none absolute top-2 right-1 border-x-2 border-t-[3px] border-transparent border-t-[#444]" />
        </span>
        <button type="button" aria-label="更多" className="flex h-full w-4 items-center justify-center border-l border-[#666]">
          <i className="border-x-4 border-t-4 border-transparent border-t-black" />
        </button>
      </div>
      <h1 className="flex flex-1 items-center justify-center gap-5 border-b border-[#333] text-[13px] leading-none text-black">
        <span>Autodesk 3ds Max&nbsp; 2014 x64</span>
        <span className="text-[12px]">无标题</span>
      </h1>
      <div className="flex shrink-0 items-center border border-[#555] bg-gradient-to-b from-[#a8a8a8] to-[#8a8a8a] text-[#f0f0f0]">
        <button type="button" aria-label="展开" className="flex w-[13px] justify-center">
          <i className="border-y-4 border-l-4 border-transparent border-l-black" />
        </button>
        <input aria-label="搜索" placeholder="键入关键字或短语" className="h-[22px] w-[178px] bg-[#f4f4f4] pl-1 text-[12px] italic outline-none placeholder:text-[#777]" />
        <Tool name="binoculars" label="搜索" box="w-6 h-5" icon="w-4 h-4" />
        <Tool name="keySmall" label="密钥" box="w-6 h-5" icon="w-4 h-4" />
        <Tool label="通讯" box="w-6 h-5"><SatelliteDish size={16} color="#222" fill="#eee" strokeWidth={1.5} /></Tool>
        <Tool label="收藏" box="w-6 h-5"><Star size={16} color="#222" fill="#eee" strokeWidth={1.5} /></Tool>
        <i className="mx-[5px] h-5 w-px bg-[#7c7c7c]" />
        <button type="button" className="mx-1 flex h-4 w-4 items-center justify-center rounded-full border border-[#333] bg-[#eef4fa] text-[12px] font-bold text-[#2a5d9c]">?</button>
        <i className="mx-1 border-x-2 border-t-[3px] border-transparent border-t-[#333]" />
      </div>
      <div className="flex shrink-0 items-center border-b border-[#333] pr-0.5 pl-6 text-black">
        <Tool label="最小化" box="w-[46px] h-6"><Minus size={12} strokeWidth={2} /></Tool>
        <Tool label="还原" box="w-[46px] h-6"><Copy size={11} strokeWidth={2} className="-scale-x-100" /></Tool>
        <Tool label="关闭" box="w-[46px] h-6"><X size={15} strokeWidth={1.5} /></Tool>
      </div>
    </div>
  );
}

const menus = ['编辑(E)', '工具(T)', '组(G)', '视图(V)', '创建(C)', '修改器(M)', '动画(A)', '图形编辑器(D)', '渲染(R)', '自定义(U)', 'MAXScript(X)', '帮助(H)', 'Max 杀毒卫士'];

function Header() {
  return (
    <header className="flex bg-[#5a5a5a]">
      <button type="button" aria-label="应用程序" className="flex h-10 w-[42px] shrink-0 items-center justify-center gap-0.5 border border-black bg-gradient-to-b from-[#a5a5a5] to-[#5c5c5c]">
        <Icon name="logo" className="h-7 w-6" />
        <i className="border-x-[3px] border-t-4 border-transparent border-t-[#333]" />
      </button>
      <div className="flex min-w-0 flex-1 flex-col">
        <TitleBar />
        <nav className="flex h-5 items-center gap-[25px] bg-gradient-to-b from-[#a6a6a6] to-[#545454] pl-[14px] text-[12px] leading-none text-[#f5f5f5]">
          {menus.map((m) => (
            <button key={m} type="button" className="shrink-0">{m}</button>
          ))}
        </nav>
      </div>
    </header>
  );
}

function MainToolbar() {
  return (
    <div className="flex h-[39px] bg-[#444]">
      <div className="flex shrink-0 items-center border border-l-0 border-black pl-0.5 pr-[9px]">
        <i className="mr-1 h-8 w-[3px] border-x border-black" />
        <Tool name="link" label="链接" /><Tool name="unlink" label="断开" /><Tool name="bind" label="绑定" />
        <Sep className="w-2" />
        <Select label="过滤器" value="全部" className="mt-1 h-5 w-[68px] self-start" />
        <Tool name="select" label="选择对象" active />
        <Tool name="selectName" /><Tool name="region" fly /><Tool name="crossing" />
        <Sep />
        <Tool name="move" /><Tool name="rotate" /><Tool name="scale" fly />
        <Select label="参考坐标系" value="视图" className="mt-1 h-5 w-[68px] self-start" />
        <Tool name="pivot" fly />
        <Sep className="w-[6px]" />
        <Tool name="manipulate" /><Tool name="keyboard" active />
        <Sep />
        <Tool name="snap3" active fly /><Tool name="snapAngle" active /><Tool name="snapPercent" /><Tool name="snapSpin" />
        <Sep />
        <Tool name="named" />
        <Select label="命名选择集" value="创建选择集" className="mt-1 h-5 w-[118px] self-start" selectClass="bg-[#585858] text-black" arrow="bg-white text-[#444]" />
        <Sep />
        <Tool name="mirror" /><Tool name="align" fly />
        <Sep className="w-[6px]" />
        <Tool name="layers" />
        <Sep className="w-[6px]" />
        <Tool name="ribbon" active /><Tool name="curve" /><Tool name="schematic" />
        <Sep className="w-[6px]" />
        <Tool name="material" fly />
        <Sep className="w-[6px]" />
        <Tool name="renderSetup" /><Tool name="renderFrame" /><Tool name="render" fly />
      </div>
    </div>
  );
}

function Ribbon() {
  const cell = 'h-[22px] border border-[#333] bg-gradient-to-b from-[#606060] to-[#4a4a4a]';
  return (
    <div className="flex border-t border-[#707070]">
      <div className="flex w-[14px] shrink-0 justify-center bg-[#444] py-1">
        <i className="w-[3px] border-x border-black" />
      </div>
      <div className="min-w-0 flex-1">
        <div role="tablist" className="flex h-5 items-end border-b border-[#2b2b2b] bg-[#525252] text-[12px] leading-none text-[#aaa]">
          <button type="button" role="tab" className="mr-[27px] h-[18px] w-[59px] border border-b-0 border-[#333] bg-[#5e5e5e] pl-[18px] text-[#ddd]">建模</button>
          <button type="button" role="tab" className="mr-[52px] h-[18px]">自由形式</button>
          <button type="button" role="tab" className="mr-[52px] h-[18px]">选择</button>
          <button type="button" role="tab" className="mr-[52px] h-[18px]">对象绘制</button>
          <button type="button" role="tab" className="mr-[31px] h-[18px]">填充</button>
          <button type="button" aria-label="最小化功能区" className="mb-[5px] flex h-2 w-[14px] items-center justify-center rounded-sm bg-[#ddd]">
            <i className="border-x-[3px] border-b-4 border-transparent border-b-[#333]" />
          </button>
          <i className="mb-2 ml-[6px] border-x-2 border-t-[3px] border-transparent border-t-[#aaa]" />
        </div>
        <div className="h-[99px] bg-gradient-to-b from-[#474747] to-[#363636]">
          <div className="flex h-[97px] w-[221px] flex-col border-r border-[#666] bg-[#555]">
            <div className="flex flex-1 items-start pt-[5px] pl-[3px]">
              <div className="flex w-[153px] flex-col">
                <div className="flex">
                  {['vertsGray', 'triGray', 'borderGray', 'polyGray', 'cube'].map((n) => (
                    <Tool key={n} name={n} box={`w-[29px] ${cell}`} icon="w-[18px] h-[18px]" />
                  ))}
                </div>
                <p className="h-[26px] pr-[6px] text-center text-[12px] leading-6 text-[#ddd]">1: UVW 展开</p>
                <div className="flex">
                  <Tool name="ghost" box={`w-6 ${cell}`} icon="w-[18px] h-[18px]" /><Tool name="ghost" box={`w-6 ${cell}`} icon="w-[18px] h-[18px]" />
                  <Tool name="ghost" box={`mr-1 w-6 ${cell}`} icon="w-[18px] h-[18px]" /><Tool name="ghost" box={`mr-1 w-6 ${cell}`} icon="w-[18px] h-[18px]" />
                  <Tool name="ring" box={`w-10 ${cell}`} icon="w-[18px] h-[18px]" />
                </div>
              </div>
              <i className="mr-[6px] h-[70px] w-px bg-[#333]" />
              <div className="mr-[3px] flex flex-col gap-0.5 pt-3">
                <Tool name="loopUp" box={`w-6 ${cell}`} icon="w-4 h-4" />
                <Tool name="loopDown" box={`w-6 ${cell}`} icon="w-4 h-4" />
              </div>
              <div className="flex flex-col gap-0.5">
                <Tool name="bulbBar" box="w-6 h-[22px] border border-[#333] bg-[#5c7ba3]" icon="w-4 h-4" />
                <Tool name="pushpin" box={`w-6 ${cell}`} icon="w-4 h-4" />
                <Tool name="showEnd" box={`w-6 ${cell}`} icon="w-4 h-4" />
              </div>
            </div>
            <button type="button" className="flex h-[17px] items-center justify-center gap-[6px] bg-gradient-to-b from-[#4b4b4b] to-[#414141] text-[12px] leading-none text-[#ddd]">
              多边形建模
              <i className="border-x-4 border-t-[5px] border-transparent border-t-[#ddd]" />
            </button>
          </div>
        </div>
      </div>
    </div>
  );
}

function LeftBars() {
  return (
    <>
      <aside className="flex w-10 shrink-0 flex-col border-r border-black bg-[#333]">
        <div className="h-[10px] bg-[#444] px-1 pt-[3px]"><i className="block h-px bg-black" /></div>
        <div className="flex-1" />
        <button type="button" aria-label="展开" className="mb-[10px] ml-[11px] flex h-5 w-[19px] items-center justify-center rounded-sm bg-[#4d4d4d]">
          <Play size={10} fill="#ddd" color="#ddd" />
        </button>
        <button type="button" aria-label="视口布局" className="mb-[2px] ml-1 h-11 rounded-l-sm bg-gradient-to-b from-[#51606f] via-[#4a6a95] to-[#3f7fdc] px-1 pb-2 pt-[6px]">
          <i className="block h-full border border-[#16315c] bg-gradient-to-b from-[#565f69] to-[#5c6b7e]" />
        </button>
      </aside>
      <aside className="flex w-[41px] shrink-0 flex-col items-center bg-[#484848] pr-0.5">
        <button type="button" className="mt-0.5 w-[34px] bg-[#585858] text-[14px] font-bold leading-4 text-[#4aa79c]">
          Max<span className="block pb-0.5 text-[13px] font-medium text-[#ccc]">杀毒</span>
        </button>
        <button type="button" aria-label="杀毒" className="mt-[13px] flex h-6 w-6 -rotate-45 items-center justify-center rounded-full border-2 border-white bg-[#128a48]">
          <Bug size={15} color="#fff" />
          <i className="absolute h-[3px] w-5 bg-white" />
        </button>
        <button type="button" aria-label="防护" className="mt-[13px] flex h-[26px] w-[26px] items-center justify-center">
          <Shield size={27} color="#fff" fill="#1b67b8" strokeWidth={1.5} />
          <Bug size={12} color="#fff" fill="#fff" className="absolute" />
        </button>
        <p className="mt-1.5 text-[18px] font-bold leading-5 text-[#666]">&lt;&nbsp;&gt;</p>
      </aside>
    </>
  );
}

function Viewport() {
  return (
    <div className="flex min-h-0 flex-1 flex-col justify-between border-2 border-[#6f6236] bg-gradient-to-b from-[#1a1a1a] to-[#4c4c4c]">
      <div className="flex justify-between">
        <p className="pt-[3px] pl-[3px] font-['Liberation_Mono','Noto_Sans_CJK_SC',monospace] text-[12px] text-[#ddd]">
          [+][<span className="text-[#999]">顶</span>][<span className="text-[#999]">真实</span>]
        </p>
        <svg viewBox="0 0 70 70" className="mt-5 mr-[18px] h-[70px] w-[70px]">
          <circle cx="35" cy="35" r="29" fill="#5a5a5a" stroke="#9a9ea2" strokeWidth="7" />
          <circle cx="35" cy="35" r="33" fill="none" stroke="#666a6e" strokeWidth="1.500" />
          <rect x="21" y="21" width="28" height="28" fill="#9da1a5" stroke="#c4c4c4" />
          <text x="28" y="40" fontSize="14" fill="#8c8f92">顶</text>
          <path d="M35 1l3 4h-6zM35 69l3-4h-6z" fill="#777" />
        </svg>
      </div>
      <svg viewBox="0 0 40 50" className="mb-4 ml-5 h-[50px] w-10">
        <path d="M6 42V16" stroke="#1f7a2a" strokeWidth="1.500" />
        <path d="M6 42h26" stroke="#8c1d1d" strokeWidth="1.500" />
        <text x="4" y="12" fontSize="10" fill="#1f7a2a">y</text>
        <text x="29" y="38" fontSize="10" fill="#8c1d1d">x</text>
        <text x="4" y="39" fontSize="9" fontWeight="bold" fill="#1a2fa8">z</text>
      </svg>
    </div>
  );
}

const frames = Array.from({ length: 101 }, (_, i) => i);

function Timeline() {
  return (
    <>
      <div className="flex h-[18px] shrink-0 text-[11px] leading-none text-[#ccc]">
        <button type="button" className="w-4 border-r border-b border-black">&lt;</button>
        <button type="button" className="w-[125px] border-r-2 border-b-2 border-black">0 / 100</button>
        <button type="button" className="w-4 border-r border-b border-black">&gt;</button>
      </div>
      <div className="flex h-[27px] shrink-0 border-t-2 border-[#1b1b1b]">
        <div className="flex w-[50px] shrink-0 items-center justify-center pr-2"><Icon name="trackIcon" className="h-[17px] w-[17px]" /></div>
        <div className="relative flex min-w-0 flex-1 justify-between bg-[#2d2d2d] px-[6px]">
          <i className="absolute top-0 left-[3px] h-full w-[7px] bg-[#8a8418]" />
          {frames.map((f) => (
            <span key={f} className="relative flex w-px flex-col items-center whitespace-nowrap text-[11px] leading-none text-[#bbb]">
              <i className="h-3 w-px shrink-0 bg-[#777]" />
              {f % 5 === 0 && <span className={f === 0 ? 'text-[#e5dc30]' : ''}>{f}</span>}
            </span>
          ))}
        </div>
        <div className="w-[49px] shrink-0" />
      </div>
    </>
  );
}

function StackRow({ label, active }) {
  return (
    <li className={`flex h-4 items-center gap-[6px] ${active ? 'bg-[#3b7bd4] pl-[6px]' : 'border-b border-[#888] pl-[6px]'}`}>
      {active && <Icon name="bulbOn" className="h-3 w-3" />}
      <button type="button" className="flex h-[9px] w-[9px] items-center justify-center bg-black text-[10px] leading-none text-[#aaa]">+</button>
      {label}
    </li>
  );
}

function ModifyColumn() {
  return (
    <div className="w-[189px] shrink-0 pt-[5px]">
      <div className="flex gap-1 pl-3">
        <input aria-label="名称" defaultValue="Box001" className="h-5 w-[147px] border-t-2 border-l-2 border-black bg-[#585858] pl-0.5 text-[12px] outline-none" />
        <button type="button" aria-label="颜色" className="h-5 w-4 border border-black bg-[#dd9ae8]" />
      </div>
      <Select label="修改器列表" value="修改器列表" className="mt-[6px] ml-3 h-[22px] w-[164px]" selectClass="bg-[#484848] text-[#ddd]" arrow="bg-white text-[#333]" />
      <div className="mt-2 ml-[7px] grid w-[166px] grid-cols-2 gap-x-0.5 gap-y-[3px]">
        {['涡轮平滑', '壳', 'FFD 4x4x4', '对称', 'FFD 3x3x3', 'FFD 选择', '', 'UVW 展开'].map((b, i) => (
          <PushButton key={i} className={b === 'FFD 选择' ? 'h-5 text-[#111]' : 'h-5'}>{b}</PushButton>
        ))}
      </div>
      <ul className="mt-[7px] ml-3 h-[127px] w-[162px] border-2 border-white bg-[#575757]">
        <StackRow label="UVW 展开" active />
        <StackRow label="可编辑多边形" />
      </ul>
      <div className="ml-[14px] flex h-[31px] items-center">
        <Tool name="pushPinW" box="w-5 h-5" icon="w-[17px] h-[17px]" /><Sep className="w-[17px]" />
        <Tool name="tube" box="w-5 h-5" icon="w-4 h-4" /><Sep className="w-4" />
        <Tool name="unique" box="w-5 h-5" icon="w-[17px] h-[17px]" />
        <Tool name="trash" box="w-6 h-5" icon="w-4 h-4" /><Sep className="w-4" />
        <Tool name="config" box="w-5 h-5" icon="w-[17px] h-[17px]" />
      </div>
      <div className="mt-2 mr-[10px] ml-1 border-t-2 border-black pt-[5px]">
        <div className="border-t border-r border-[#2e2e2e] pt-[14px] pr-[3px] pl-[5px]">
          <Rollout title="选择" className="h-[190px]" body="px-[6px] pt-[7px]">
            <div className="flex h-[28px] items-center">
              <Tool name="verts" active box="ml-[6px] w-[26px] h-[26px]" />
              <Tool name="tri" box="w-8 h-6" icon="w-[22px] h-[22px]" /><Tool name="poly" box="w-6 h-6" icon="w-6 h-6" />
              <div className="flex-1" />
              <Tool name="element" box="mr-[7px] w-6 h-6" icon="w-[24px] h-[24px]" />
            </div>
            <Group title="修改选择:" className="h-[56px]">
              <div className="flex items-center gap-1 px-[7px] pt-1">
                <Icon name="grow" /><Icon name="shrink" />
                <div className="flex-1" />
                <Icon name="dashGray" /><Icon name="barsGray" className="h-5 w-[22px]" />
              </div>
            </Group>
            <Group title="选择方式:" className="h-[89px]">
              <div className="flex items-center pl-0.5 pt-1">
                <Tool name="selElement" active box="w-[26px] h-[26px]" /><Tool name="pathGray" box="w-7 h-6" icon="w-5 h-5" />
                <Tool name="planar" box="ml-[17px] mr-0.5 w-6 h-6" icon="w-[22px] h-[22px]" />
                <Spinner label="平面角" value="0.0" className="mb-1" />
              </div>
              <div className="mt-[6px] flex items-center pl-[3px]">
                <Tool name="smooth" box="w-6 h-6" icon="w-[22px] h-[22px]" />
                <Spinner label="平滑组" value="0" width="w-[26px]" className="mb-1 ml-0.5" />
                <Tool name="matId" box="ml-[9px] mr-[2px] w-6 h-6" icon="w-[22px] h-[22px]" />
                <Spinner label="材质 ID" value="0" width="w-[26px]" className="mb-1" />
              </div>
            </Group>
          </Rollout>
          <Rollout title="编辑 UV" className="mt-[16px] h-[128px]" body="px-3">
            <PushButton className="mt-[5px] h-[26px] w-full">打开 UV 编辑器 ...</PushButton>
            <PushButton className="mt-[5px] h-[26px] w-full">视图中扭曲</PushButton>
            <div className="mt-2.5 flex items-center justify-center">
              <Tool name="planeQuick" box="w-7 h-6" icon="w-[22px] h-[22px]" />
              <Tool name="planeBulb" active box="w-[27px] h-[27px]" />
              <Tool name="planeUp" fly box="w-8 h-6" icon="w-[22px] h-[22px]" />
            </div>
          </Rollout>
        </div>
      </div>
    </div>
  );
}

function ParamColumn() {
  return (
    <div className="flex-1 border-l border-black pr-[13px] pl-0.5">
      <Rollout title="通道" className="mt-[14px] h-[143px]" body="px-[5px]">
        <div className="grid grid-cols-2 gap-0.5 pt-0.5">
          <PushButton className="h-[23px]">重置 UVW</PushButton>
          <PushButton className="h-[23px]">保存...</PushButton>
          <PushButton className="col-start-2 h-[23px]">加载...</PushButton>
        </div>
        <Group title="通道:" className="-mt-0.5 h-[69px] pl-[6px]">
          <div className="flex items-center pt-1">
            <Radio name="channel" label="贴图通道:" checked className="h-5 w-[90px]" />
            <Spinner label="贴图通道" value="1" width="w-8" />
          </div>
          <Radio name="channel" label="顶点颜色通道" className="h-5" />
        </Group>
      </Rollout>
      <Rollout title="剥" className="mt-[15px] h-[107px]" body="px-[5px] pt-[6px]">
        <div className="flex justify-center gap-[7px]">
          {['stoneQuick', 'stone', 'resetPeel', 'pelt'].map((n) => <Tool key={n} name={n} box="w-[22px] h-[26px]" icon="w-[22px] h-[22px]" />)}
        </div>
        <Group title="接缝:" className="mt-1 h-[54px]">
          <div className="flex justify-center gap-[6px] pt-0.5">
            {['seamEdit', 'seamPath', 'seamConv', 'seamExp'].map((n) => <Tool key={n} name={n} box="w-[22px] h-6" icon="w-5 h-5" />)}
          </div>
        </Group>
      </Rollout>
      <Rollout title="投影" className="mt-[15px] h-[149px]" body="px-[6px] pt-[7px]">
        <div className="flex justify-center gap-[6px]">
          {['plane', 'cylinder', 'sphere', 'box'].map((n) => <Tool key={n} name={n} box="w-[22px] h-[26px]" icon="w-5 h-5" />)}
        </div>
        <Group title="对齐选项:" className="mt-[6px] h-[92px] px-[6px]">
          <div className="flex items-center justify-between pt-[3px]">
            {['X', 'Y', 'Z'].map((a) => (
              <button key={a} type="button" className="flex h-[21px] w-[21px] items-center justify-center border-2 border-[#c2c2c2] bg-[#444] p-px">
                <span className="flex h-full w-full items-center justify-center bg-[#c2c2c2] text-[13px] leading-none text-[#222]">{a}</span>
              </button>
            ))}
            <Icon name="axes" className="h-5 w-5" /><Icon name="viewAlign" className="h-[22px] w-[22px]" />
          </div>
          <div className="mt-3 flex gap-0.5">
            <PushButton className="h-[26px] w-[49px] text-[#111]">适配</PushButton>
            <PushButton className="h-[26px] w-[53px] text-[#111]">居中</PushButton>
            <Tool name="undoArrow" box="ml-1 w-6 h-6" icon="w-5 h-5" />
          </div>
        </Group>
      </Rollout>
      <Rollout title="包裹" className="mt-[15px] h-[55px]" body="pt-2">
        <div className="flex justify-center gap-9">
          <Icon name="spline" /><Icon name="unfold" className="h-[22px] w-[22px]" />
        </div>
      </Rollout>
      <Rollout title="配置" className="mt-[15px] h-[175px]" body="px-[6px] pt-[6px]">
        <Group title="显示:" className="h-[93px] pl-[6px]">
          <Check label="贴图接缝" checked className="mt-[5px] h-5" />
          <Check label="接缝" checked className="mt-px h-5" />
          <div className="mt-0.5 flex h-5 items-center pl-0.5">
            <Radio name="seam" label="厚" checked className="w-16" />
            <Radio name="seam" label="薄" />
          </div>
        </Group>
        <Check label="防止重展平" className="mt-[6px] ml-[6px] h-5" />
        <Check label="规格化贴图" checked className="mt-[5px] ml-[6px] h-5" />
      </Rollout>
    </div>
  );
}

function CommandPanel() {
  const [tab, setTab] = useState('modify');
  return (
    <aside className="w-[369px] shrink-0 bg-[#444] text-[12px] text-[#d0d0d0]">
      <div role="tablist" className="flex h-7 items-end border-b border-black pl-[3px]">
        {['create', 'modify', 'hierarchy', 'motion', 'display', 'hammer'].map((t) => (
          <button
            key={t}
            type="button"
            role="tab"
            aria-label={t}
            onClick={() => setTab(t)}
            className={`flex h-6 w-[29px] items-center justify-center rounded-t border border-b-0 border-black ${t === tab ? 'bg-[#505050]' : ''}`}
          >
            <Icon name={t} className="h-5 w-5" />
          </button>
        ))}
      </div>
      <div className="flex">
        <ModifyColumn />
        <ParamColumn />
      </div>
    </aside>
  );
}

function CoordField({ axis }) {
  return (
    <label className="flex items-center gap-px">
      {axis}:
      <input className="h-5 w-[58px] border-t-2 border-l-2 border-[#161616] bg-[#555] outline-none" />
    </label>
  );
}

function StatusBar() {
  const field = 'border-t-2 border-l-2 border-[#1c1c1c] pl-0.5';
  const small = 'w-4 h-4';
  return (
    <footer className="flex h-[50px] items-start gap-1 border-t border-black bg-[#444] pt-[3px] text-[12px] leading-none text-[#d0d0d0]">
      <div className="flex w-[99px] shrink-0 flex-col gap-px pl-0.5">
        <div className="h-[21px] border border-t-2 border-[#888] bg-[#dcc4c6]" />
        <input aria-label="MAXScript" defaultValue="欢迎使用 MAXSc" className="h-[23px] border border-[#888] bg-white pb-1 pl-1 font-['Liberation_Mono','Noto_Sans_CJK_SC',monospace] text-[12px] text-black outline-none" />
      </div>
      <i className="h-[46px] w-[3px] shrink-0 border-x border-black" />
      <div className="flex min-w-0 flex-1 flex-col gap-[3px]">
        <div className="flex h-[22px] items-center">
          <p className={`flex h-full flex-1 items-center ${field}`}>选择了 1 个 对象</p>
          <div className="flex w-[328px] shrink-0 items-center justify-between pl-1.5 pr-[18px]">
            <Tool name="balloon" box="w-5 h-5" icon={small} />
            <Tool name="lock" box="w-5 h-5" icon="w-[14px] h-[14px]" />
            <Tool name="offset" box="w-5 h-5" icon={small} />
            <CoordField axis="X" /><CoordField axis="Y" /><CoordField axis="Z" />
          </div>
        </div>
        <div className="flex h-[22px] items-center">
          <p className={`flex h-full flex-1 items-center ${field}`}>选择纹理顶点</p>
          <Tool name="isolate" active box="ml-1 w-[22px] h-[22px]" icon="w-4 h-4" />
        </div>
      </div>
      <div className="flex w-[99px] shrink-0 flex-col gap-[3px]">
        <p className={`flex h-[21px] items-center border-r ${field}`}>栅格 = 10.0</p>
        <button type="button" className="h-[21px] border-l-2 border-[#1c1c1c] pl-0.5 text-left">添加时间标记</button>
      </div>
      <button type="button" aria-label="设置关键点" className="flex h-[43px] w-[41px] shrink-0 items-center justify-center border border-black"><Icon name="keyBig" className="h-6 w-6" /></button>
      <div className="flex w-[66px] shrink-0 flex-col gap-[3px]">
        <PushButton className="h-5">自动关键点</PushButton>
        <PushButton className="h-5">设置关键点</PushButton>
      </div>
      <div className="flex w-[112px] shrink-0 flex-col gap-[3px]">
        <Select label="选定对象" value="选定对象" className="h-5" />
        <div className="flex">
          <Tool name="redCurve" fly box="w-6 h-5" icon="w-4 h-4" />
          <PushButton className="h-5 flex-1">关键点过滤器...</PushButton>
        </div>
      </div>
      <div className="flex w-[228px] shrink-0 flex-col gap-[3px] pl-[5px]">
        <div className="flex h-5 items-center">
          {['first', 'prev', 'playG', 'next', 'last', 'zoom', 'zoomAll', 'extents'].map((n) => (
            <Tool key={n} name={n} box="w-[25px] h-5" icon={small} />
          ))}
          <Tool name="extentsAll" box="w-5 h-5" icon={small} />
        </div>
        <div className="flex h-5 items-center">
          <Tool name="keyMode" box="w-6 h-5" icon={small} />
          <Spinner label="当前帧" value="0" width="w-16" />
          <Tool name="timeCfg" box="w-[26px] h-5" icon={small} />
          <Tool name="regionDot" box="w-[25px] h-5" icon={small} />
          <Tool name="hand" fly box="w-6 h-5" icon={small} />
          <Tool name="fov" fly box="w-6 h-5" icon={small} />
          <Tool name="maxView" box="w-5 h-5" icon={small} />
        </div>
      </div>
    </footer>
  );
}

function UvCanvas() {
  return (
    <svg viewBox="0 0 521 560" className="ml-0.5 h-[560px] w-[521px] shrink-0 bg-[#3b3b3b]">
      <defs>
        <pattern id="check" x="138" y="70" width="28.700" height="28.700" patternUnits="userSpaceOnUse">
          <rect width="28.700" height="28.700" fill="#cfcfcf" />
          <path d="M0 0h14.350v14.350H0zM14.350 14.350H28.700V28.700H14.350z" fill="#939393" />
        </pattern>
      </defs>
      <path d="M138.500 0v70" stroke="#4a4a4a" />
      <path d="M282.500 0v560M425.500 0v560M138.500 357v203M0 70.500h521M0 214.500h521M0 357.500h521M0 501.500h521" stroke="#a0a0a0" />
      <rect x="138" y="70" width="287" height="287" fill="url(#check)" stroke="#1fc91f" strokeWidth="1.500" />
      <path d="M137 69h3v3h-3zM424 69h3v3h-3zM137 356h3v3h-3zM424 356h3v3h-3z" fill="#fff" />
    </svg>
  );
}

function UvPanel() {
  return (
    <aside className="min-w-0 flex-1 overflow-hidden border-l-2 border-black bg-[#444] px-px pt-[13px] text-[12px] text-[#d0d0d0]">
      <Rollout title="快速变换" className="h-[77px]" body="px-1 pt-1">
        <div className="flex items-center justify-between">
          <Tool name="center" fly box="w-[22px] h-[22px]" icon="w-[22px] h-[22px]" />
          <div className="grid grid-cols-3 gap-x-1 gap-y-1.5">
            {['alignH', 'linear', 'rotCcw', 'alignV', 'alignEdge', 'rotCw'].map((n) => <Tool key={n} name={n} box="w-6 h-6" icon="w-[22px] h-[22px]" />)}
          </div>
          <i className="h-14 w-px bg-[#777]" />
          <div className="flex flex-col gap-1.5"><Icon name="spaceH" /><Icon name="spaceV" /></div>
        </div>
      </Rollout>
      <Rollout title="重新塑造元素" className="mt-[14px] h-[46px]" body="pt-1">
        <div className="flex justify-center gap-1 pl-1">
          {['straighten', 'relaxAuto', 'relax'].map((n) => <Icon key={n} name={n} />)}
        </div>
      </Rollout>
      <Rollout title="缝合" className="mt-[15px] h-[46px]" body="pt-1 pr-1">
        <div className="flex justify-center gap-1">
          {['stitch1', 'stitch2', 'stitch3', 'stitch4'].map((n) => <Icon key={n} name={n} />)}
        </div>
      </Rollout>
      <Rollout title="炸开" className="mt-[15px] h-[94px]" body="px-[6px] pt-[6px]">
        <div className="flex justify-center gap-1 pr-0.5">
          {['breakUv', 'flatAngle', 'flatGroup', 'flatMat', 'flatCustom'].map((n) => <Icon key={n} name={n} />)}
        </div>
        <Group title="焊接" className="h-[52px]">
          <div className="flex items-start gap-1 pt-0.5 pl-[6px]">
            <Icon name="target" /><Icon name="weld" />
            <div className="-mt-2 ml-[14px] leading-4">阈值:<Spinner label="阈值" value="0.01" width="w-[30px]" /></div>
          </div>
        </Group>
      </Rollout>
      <Rollout title="剥" className="mt-[15px] h-[124px]" body="px-[11px] pt-[6px]">
        <div className="h-[57px] border border-black pt-[6px]">
          <Check label="分离" checked className="ml-[26px] h-5" />
          <div className="flex justify-center gap-1 pr-1">
            {['stoneQuick', 'stone', 'resetPeel'].map((n) => <Tool key={n} name={n} box="w-6 h-6" icon="w-[22px] h-[22px]" />)}
          </div>
        </div>
        <Group title="枢轴:" className="h-[52px]">
          <div className="flex items-center pl-[5px]">
            <Tool name="pin" box="w-7 h-6" icon="w-[20px] h-[20px]" /><Tool name="pinX" box="w-7 h-6" icon="w-[20px] h-[20px]" />
            <Tool name="pinAuto" active box="w-[27px] h-[27px]" icon="w-[20px] h-[20px]" />
            <Tick className="w-3" />
            <Tool name="pinSel" box="w-7 h-6" icon="w-[20px] h-[20px]" />
          </div>
        </Group>
      </Rollout>
      <Rollout title="排列元素" className="mt-[15px] h-[130px]" body="px-[7px] pt-[6px]">
        <div className="flex gap-[9px]">
          <div className="flex flex-col gap-2 pt-3"><Icon name="packFull" /><Icon name="packRescale" /></div>
          <div className="flex h-[110px] flex-1 gap-3 border border-black pt-3 pl-1">
            <div className="flex flex-col gap-2"><Icon name="packSmall" /><Icon name="packRound" /></div>
            <div className="-mt-1.5 whitespace-nowrap">
              <Check label="重缩放" checked className="h-5" />
              <Check label="旋转" className="h-5" />
              <p className="leading-[18px]">填充:</p>
              <i className="block h-0.5 w-9 bg-black" />
            </div>
          </div>
        </div>
      </Rollout>
    </aside>
  );
}

function UvwEditor() {
  return (
    <div role="dialog" aria-label="编辑 UVW" className="absolute top-[181px] left-[504px] w-[700px] border-[7px] border-[#f93a3a] bg-[#3c3c3c] text-[12px]">
      <div className="mr-0.5 flex h-[26px] items-center bg-white pl-2 text-black">
        <Icon name="logo" className="h-4 w-4" />
        <h2 className="flex-1 pl-[6px]">编辑 UVW</h2>
        <Tool label="最小化" box="w-[45px] h-6"><Minus size={12} strokeWidth={2} /></Tool>
        <Tool label="最大化" box="w-[45px] h-6"><Square size={12} strokeWidth={2} /></Tool>
        <Tool label="关闭" box="w-[46px] h-6"><X size={15} strokeWidth={1.5} /></Tool>
      </div>
      <nav className="mr-0.5 flex h-[23px] items-center gap-[14px] bg-white pl-2 text-black">
        {['文件', '编辑', '选择', '工具', '贴图', '选项', '显示', '视图'].map((m) => <button key={m} type="button">{m}</button>)}
      </nav>
      <div className="flex h-[29px] items-center border-b border-[#6a6a6a] bg-[#444] pr-[18px] pl-[3px]">
        <Tool name="uvMove" active fly box="w-[26px] h-[26px]" icon="w-[22px] h-[22px]" />
        <Tool name="rotate" box="w-7 h-6" icon="w-[22px] h-[22px]" />
        <Tool name="uvScale" fly box="w-7 h-6" icon="w-[23px] h-[22px]" /><Tool name="uvFree" box="w-7 h-6" icon="w-[21px] h-[21px]" />
        <Tick className="w-[14px]" /><Tool name="uvMirror" fly box="w-6 h-6" icon="w-[22px] h-[22px]" />
        <div className="flex-1" />
        <i className="mr-0.5 h-full w-px bg-[#777]" />
        <Tool name="checker" active box="w-[26px] h-[26px]" icon="w-[18px] h-[18px]" />
        <span className="w-8 text-center text-[14px] text-[#bbb]">UV</span>
        <Tool name="props" box="w-6 h-6" icon="w-4 h-4" />
        <Select label="贴图" value="CheckerPattern （ 棋盘格 ）" className="mb-0.5 ml-0.5 h-5 w-[169px]" selectClass="!text-clip bg-[#dedede] text-black font-['Liberation_Mono','Noto_Sans_CJK_SC',monospace]" />
      </div>
      <div className="flex h-[560px]">
        <UvCanvas />
        <UvPanel />
      </div>
      <div className="flex h-[31px] items-center border-t border-[#6a6a6a] bg-[#444] pl-[3px] text-[#d0d0d0]">
        <Tool name="verts" active box="w-[26px] h-[26px]" icon="w-[22px] h-[22px]" />
        <Tool name="tri" box="w-[30px] h-6" icon="w-[22px] h-[22px]" /><Tool name="poly" box="w-7 h-6" icon="w-[22px] h-[22px]" />
        <Tick className="w-2" /><Tool name="element" box="mx-0.5 w-6 h-6" icon="w-6 h-6" /><Tick className="w-3" />
        {['grow', 'shrink', 'dashes', 'dashPlus', 'dashMinus', 'bars', 'barPlus', 'barMinus', 'brush', 'brushBig', 'brushSmall'].map((n) => (
          <Tool key={n} name={n} box="w-7 h-6" icon="w-[22px] h-[22px]" />
        ))}
        <Tick className="w-4" />
        <Tool name="falloff" box="w-6 h-6 mr-[6px]" icon="w-6 h-6" />
        <Spinner label="衰减" value="0.0" width="w-[37px]" className="mb-1" />
        <Tool name="diag" fly box="ml-[6px] w-7 h-6" icon="w-5 h-5" />
        <span className="w-7 text-center text-[14px]">XY</span>
        <Tick className="w-[10px]" />
        <Tool name="softUnits" active box="mr-[6px] w-[27px] h-[26px]" icon="w-[22px] h-[22px]" />
        <Spinner label="边距离" value="16" width="w-5" className="mb-1" />
      </div>
      <div className="flex h-[29px] items-center border-y border-[#6a6a6a] bg-[#444] pl-[5px] text-[11px] text-[#ccc]">
        <Tool name="offset" box="w-6 h-6" icon="w-[21px] h-[21px]" /><Tick className="w-3" />
        {['U', 'V', 'W'].map((a) => (
          <div key={a} className="mr-[7px] mb-1 flex w-[59px] shrink-0 items-center justify-between">{a}:<Spinner label={a} value="0.0" /></div>
        ))}
        <Tick className="w-2" />
        <i className="ml-[21px] h-full w-px shrink-0 bg-[#777]" />
        <Tool name="lock" box="ml-[3px] w-6 h-6" icon="w-5 h-5" />
        <Tool name="hide" box="mx-[5px] w-6 h-6" icon="w-[22px] h-[22px]" /><Tick className="w-[6px]" />
        <Tool name="bulb" fly box="w-7 h-6" icon="w-5 h-5" />
        <Tool label="冻结" fly box="w-7 h-6"><Snowflake size={19} color="#bfe3ff" strokeWidth={2.5} /></Tool>
        <Tick className="w-[10px]" />
        <Select label="材质 ID" value="所有 ID" className="mb-0.5 h-5 w-[139px]" selectClass="bg-[#dedede] text-black font-['Liberation_Mono','Noto_Sans_CJK_SC',monospace]" />
        <Tool name="hand" box="ml-[3px] w-7 h-6" icon="w-[22px] h-[22px]" />
        <Tool name="zoom" box="w-7 h-6" icon="w-[22px] h-[22px]" /><Tool name="zoomRegion" box="w-7 h-6" icon="w-[21px] h-[21px]" />
        <Tool name="zoomExt" fly box="w-7 h-6" icon="w-[22px] h-[22px]" /><Tool name="gridSnap" fly box="w-7 h-6" icon="w-[22px] h-[22px]" />
      </div>
      <div className="h-[7px]" />
    </div>
  );
}

export default function App() {
  return (
    <div className="relative flex min-h-screen flex-col overflow-hidden bg-[#444] font-['Noto_Sans','Noto_Sans_CJK_SC',sans-serif]">
      <div className="h-[3px] shrink-0 bg-black" />
      <Header />
      <MainToolbar />
      <Ribbon />
      <main className="flex flex-1">
        <LeftBars />
        <div className="flex min-w-0 flex-1 flex-col bg-[#484848]">
          <Viewport />
          <Timeline />
        </div>
        <CommandPanel />
      </main>
      <StatusBar />
      <div className="flex h-2 shrink-0 bg-gradient-to-r from-[#1f3c48] to-[#1b2342] text-[8px] leading-none text-white">
        <i className="ml-[245px] h-full w-12 bg-[#b06c30]" />
        <i className="ml-[246px] h-full w-12 bg-[#4d6470]" />
        <time className="mr-6 ml-auto">14:45</time>
      </div>
      <UvwEditor />
      <p className="pointer-events-none absolute right-[52px] bottom-[52px] text-[58px] leading-none text-white [text-shadow:2px_3px_3px_#222]">知乎 @黑白</p>
    </div>
  );
}
